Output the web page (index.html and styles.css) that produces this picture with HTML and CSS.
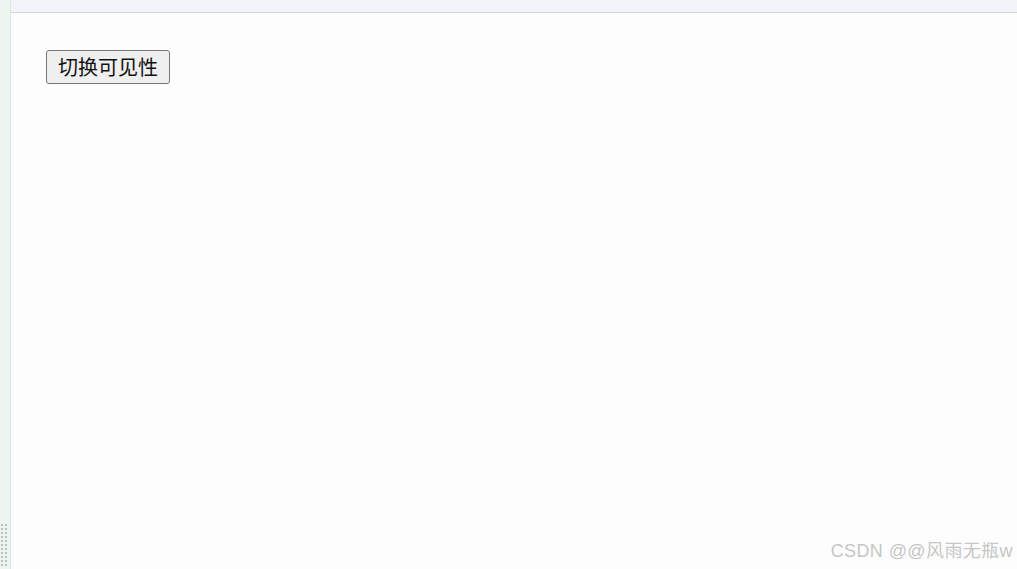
FILE: index.html
```html
<!DOCTYPE html>
<html lang="zh">
<head>
<meta charset="UTF-8" />
<meta name="viewport" content="width=device-width, initial-scale=1" />
<title>切换可见性</title>
<link rel="stylesheet" href="styles.css">
</head>
<body>
  <div class="frame">
    <aside class="side-strip">
      <div class="grip"></div>
    </aside>
    <div class="main">
      <div class="top-bar"></div>
      <div class="content">
        <button class="toggle-btn" type="button">切换可见性</button>
      </div>
    </div>
  </div>
  <div class="watermark">CSDN @@风雨无瓶w</div>
</body>
</html>
```

FILE: styles.css
```css
*, *::before, *::after {
  box-sizing: border-box;
}
html, body {
  margin: 0;
  padding: 0;
  height: 100%;
}
body {
  background: #fdfdfd;
  font-family: "Liberation Sans", "Noto Sans CJK SC", sans-serif;
  overflow: hidden;
}
.frame {
  display: flex;
  height: 569px;
}
/* left strip */
.side-strip {
  width: 11px;
  flex: none;
  background: #eef5f1;
  border-right: 1px solid #dfe6e2;
  display: flex;
  flex-direction: column;
  justify-content: flex-end;
}
.grip {
  width: 8px;
  height: 44px;
  margin-bottom: 2px;
  background-image: radial-gradient(circle, #b8bcba 1px, transparent 1.2px);
  background-size: 4px 4px;
}
.main {
  flex: 1;
  display: flex;
  flex-direction: column;
}
.top-bar {
  height: 13px;
  flex: none;
  background: #f3f4fa;
  border-bottom: 1px solid #d9dadd;
}
.content {
  padding: 37px 35px;
}
.toggle-btn {
  font-family: "Noto Sans CJK SC", sans-serif;
  font-size: 20px;
  line-height: 26px;
  height: 34px;
  width: 124px;
  padding: 0 4px;
  background: #efefef;
  color: #111;
  border: 1px solid #767676;
  border-radius: 3px;
}
/* watermark */
.watermark {
  position: absolute;
  right: 4px;
  bottom: 7px;
  font-size: 18px;
  color: #c6c6c6;
  font-family: "Liberation Sans", "Noto Sans CJK SC", sans-serif;
  letter-spacing: 0.4px;
}
```
